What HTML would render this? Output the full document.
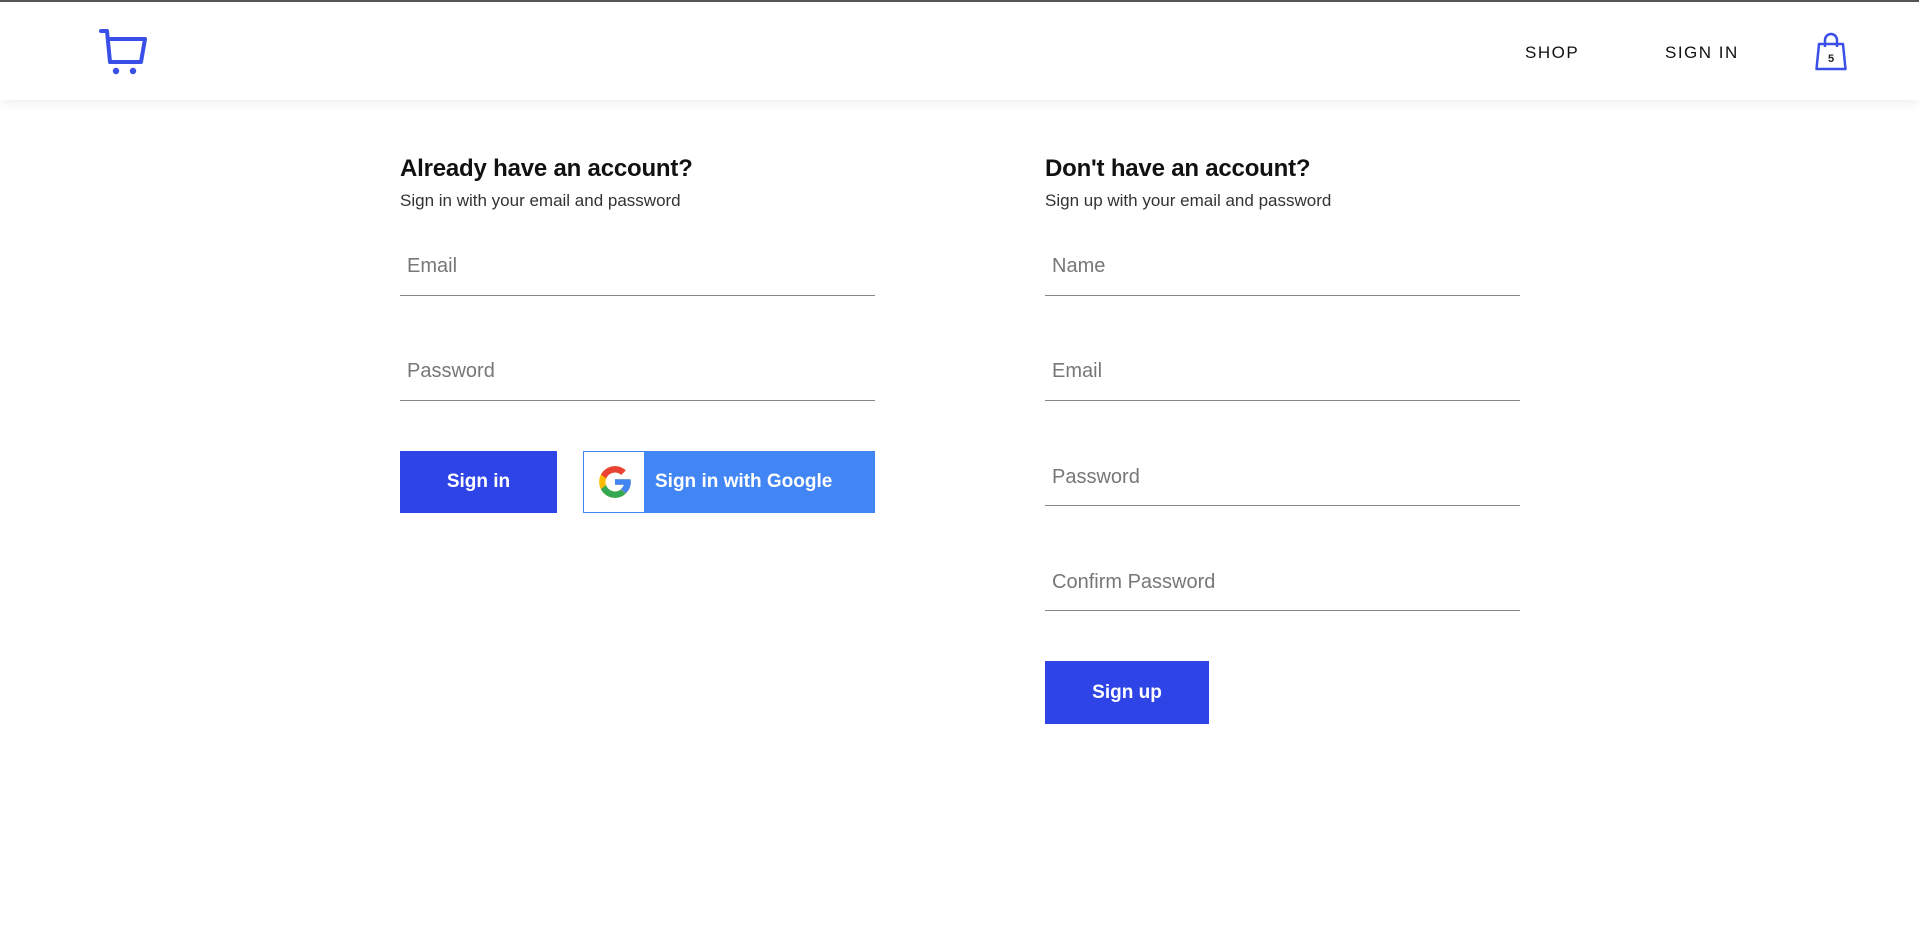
<!DOCTYPE html>
<html><head><meta charset="utf-8"><style>
*{box-sizing:border-box;margin:0;padding:0}
body{width:1919px;height:932px;background:#fff;font-family:"Liberation Sans",sans-serif;position:relative;overflow:hidden}
.top{position:absolute;top:0;left:0;right:0;height:2px;background:#555}
.hdr{position:absolute;top:2px;left:0;right:0;height:98px;background:#fff;box-shadow:0 4px 10px rgba(0,0,0,.06)}
.nav{position:absolute;top:43px;font-size:17px;letter-spacing:1.5px;color:#111}
h2{position:absolute;top:155px;font-size:24px;font-weight:bold;color:#111;white-space:nowrap;letter-spacing:-0.2px}
.sub{position:absolute;top:191px;font-size:17px;color:#333;white-space:nowrap}
.f{position:absolute;width:475px;border-bottom:1.5px solid #888;height:0}
.ph{position:absolute;font-size:20px;color:#777;white-space:nowrap}
.btn{position:absolute;background:#2e44e6;color:#fff;font-weight:bold;font-size:19px;display:flex;align-items:center;justify-content:center}
</style></head><body>
<div class="hdr"></div><div class="top"></div>
<svg style="position:absolute;left:98px;top:28px" width="50" height="48" viewBox="0 0 50 48"><path d="M3 3H9L12 34H43L47 11H10" fill="none" stroke="#3a4fe8" stroke-width="4" stroke-linecap="round" stroke-linejoin="round"/><circle cx="18" cy="43" r="3.2" fill="#3a4fe8"/><circle cx="35" cy="43" r="3.2" fill="#3a4fe8"/></svg>
<div class="nav" style="left:1525px">SHOP</div>
<div class="nav" style="left:1665px">SIGN IN</div>
<svg style="position:absolute;left:1815px;top:32px" width="32" height="40" viewBox="0 0 32 40"><path d="M4 12H28L30.5 37H1.5Z" fill="none" stroke="#3a4fe8" stroke-width="2.5" stroke-linejoin="round"/><path d="M10 15V8a6 6 0 0 1 12 0v7" fill="none" stroke="#3a4fe8" stroke-width="2.5"/><text x="16" y="30" text-anchor="middle" font-family="Liberation Sans" font-weight="bold" font-size="11" fill="#222">5</text></svg>

<h2 style="left:400px">Already have an account?</h2>
<div class="sub" style="left:400px">Sign in with your email and password</div>
<div class="ph" style="left:407px;top:255px">Email</div>
<div class="f" style="left:400px;top:295px"></div>
<div class="ph" style="left:407px;top:360px">Password</div>
<div class="f" style="left:400px;top:400px"></div>
<div class="btn" style="left:400px;top:451px;width:157px;height:62px">Sign in</div>
<div class="btn" style="left:583px;top:451px;width:292px;height:62px;background:#4285f4;justify-content:flex-start;padding-left:72px">Sign in with Google</div>
<div style="position:absolute;left:584px;top:452px;width:60px;height:60px;background:#fff"></div>
<svg style="position:absolute;left:596px;top:463px" width="38" height="38" viewBox="0 0 48 48"><path d="M43.6 20.5H24v7h11.3C33.7 33 29.3 36 24 36c-6.6 0-12-5.4-12-12s5.4-12 12-12c3.1 0 5.8 1.1 7.9 3l5.700-5.7C34 6.1 29.3 4 24 4 12.9 4 4 12.9 4 24s8.9 20 20 20 20-8.9 20-20c0-1.2-.1-2.4-.4-3.5z" fill="#fbbc05"/><path d="M6.3 14.7l6.6 4.8C14.7 15.1 19 12 24 12c3.1 0 5.8 1.1 7.9 3l5.7-5.7C34 6.1 29.3 4 24 4 16.3 4 9.7 8.3 6.3 14.7z" fill="#ea4335"/><path d="M24 44c5.2 0 9.9-2 13.4-5.2l-6.2-5.2C29.2 35.1 26.7 36 24 36c-5.2 0-9.6-3.3-11.3-8l-6.5 5C9.5 39.6 16.2 44 24 44z" fill="#34a853"/><path d="M43.6 20.5H24v7h11.3c-.8 2.3-2.300 4.2-4.1 5.6l6.2 5.2C41.7 34.6 44 29.7 44 24c0-1.2-.1-2.4-.4-3.5z" fill="#4285f4"/></svg>

<h2 style="left:1045px">Don't have an account?</h2>
<div class="sub" style="left:1045px">Sign up with your email and password</div>
<div class="ph" style="left:1052px;top:255px">Name</div>
<div class="f" style="left:1045px;top:295px"></div>
<div class="ph" style="left:1052px;top:360px">Email</div>
<div class="f" style="left:1045px;top:400px"></div>
<div class="ph" style="left:1052px;top:466px">Password</div>
<div class="f" style="left:1045px;top:505px"></div>
<div class="ph" style="left:1052px;top:571px">Confirm Password</div>
<div class="f" style="left:1045px;top:610px"></div>
<div class="btn" style="left:1045px;top:661px;width:164px;height:63px">Sign up</div>
</body></html>
